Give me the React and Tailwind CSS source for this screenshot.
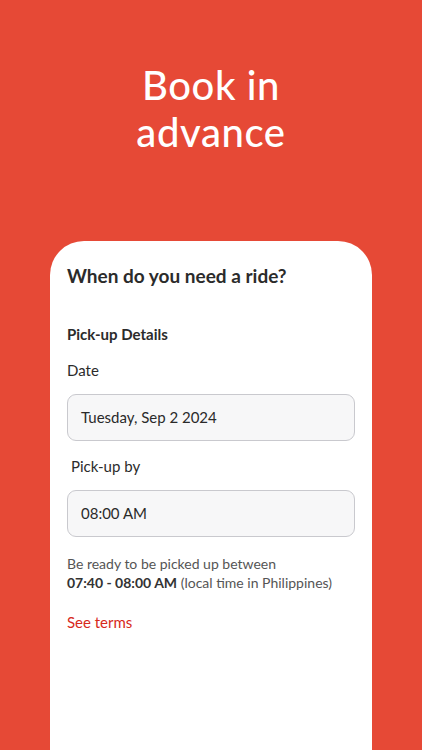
import React from 'react';

const font = { fontFamily: 'Lato, "Noto Sans", sans-serif' };

function Field({ value }) {
    return (
        <div className="h-[47px] flex items-center px-[13px] bg-[#f7f7f8] border border-[#c9c9ce] rounded-[9px] text-[15px] text-[#2a2a2a]">
            {value}
        </div>
    );
}

export default function App() {
    return (
        <div className="w-[422px] h-[750px] bg-[#e64936] flex flex-col overflow-hidden" style={font}>
            <h1 className="pt-[62px] text-center text-white text-[40px] leading-[47px] font-medium tracking-[0.6px]">
                Book in<br />advance
            </h1>

            <div className="mt-[85px] mx-[50px] flex-1 bg-white rounded-t-[34px] px-[17px] pt-[21px]">
                <h2 className="text-[19px] leading-[28px] font-bold text-[#2b2b2b]">When do you need a ride?</h2>

                <h3 className="mt-[34px] text-[15px] leading-[20px] font-bold text-[#2b2b2b]">Pick-up Details</h3>
                <p className="mt-[16px] text-[15px] leading-[20px] text-[#2b2b2b]">Date</p>
                <div className="mt-[14px]">
                    <Field value="Tuesday, Sep 2 2024" />
                </div>

                <p className="mt-[15px] ml-[4px] text-[15px] leading-[20px] text-[#2b2b2b]">Pick-up by</p>
                <div className="mt-[14px]">
                    <Field value="08:00 AM" />
                </div>

                <div className="mt-[17px] text-[14px] leading-[19px] text-[#555]">
                    <p>Be ready to be picked up between</p>
                    <p><span className="font-bold text-[#333]">07:40 - 08:00 AM</span> (local time in Philippines)</p>
                </div>

                <a className="block mt-[20px] text-[15px] leading-[20px] text-[#d7291b]">See terms</a>
            </div>
        </div>
    );
}
